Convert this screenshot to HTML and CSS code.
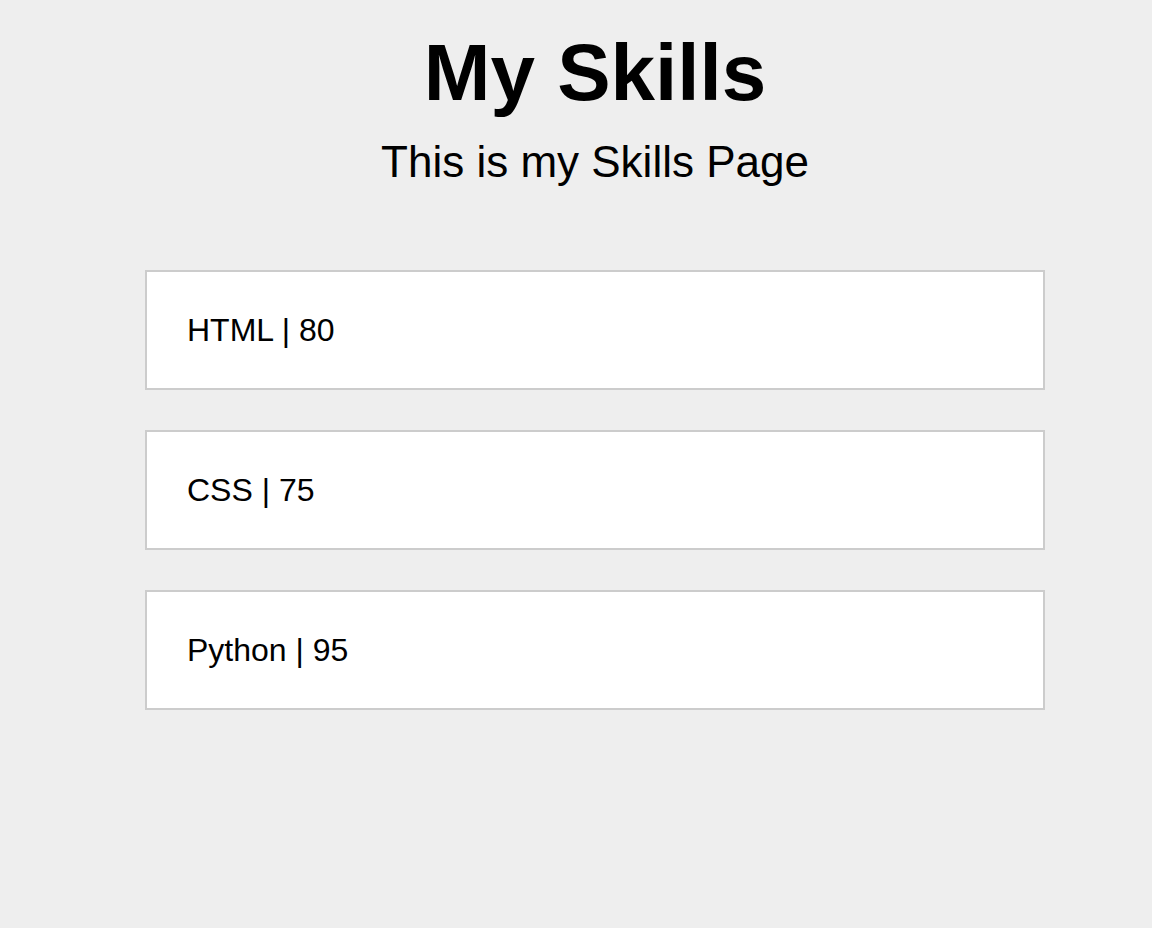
FILE: index.html
```html
<!DOCTYPE html>
<html lang="en">
<head>
<meta charset="utf-8">
<title>My Skills</title>
<link rel="stylesheet" href="styles.css">
</head>
<body>
<main class="page">
  <header class="header">
    <h1 class="title">My Skills</h1>
    <p class="subtitle">This is my Skills Page</p>
  </header>
  <section class="skills">
    <div class="skill">HTML | 80</div>
    <div class="skill">CSS | 75</div>
    <div class="skill">Python | 95</div>
  </section>
</main>
</body>
</html>
```
FILE: styles.css
```css
html, body {
  margin: 0;
  padding: 0;
  background: #eeeeee;
  font-family: "Liberation Sans", Arial, sans-serif;
  color: #000;
}
.page {
  margin-left: 38px;
  padding-top: 27px;
  display: flex;
  flex-direction: column;
  align-items: center;
}
.header {
  text-align: center;
}
.title {
  margin: 0;
  font-size: 80px;
  font-weight: bold;
  line-height: 92px;
}
.subtitle {
  margin: 17px 0 0;
  font-size: 44px;
  line-height: 51px;
}
.skills {
  margin-top: 83px;
  width: 900px;
  display: flex;
  flex-direction: column;
  gap: 40px;
}
.skill {
  background: #fff;
  border: 2px solid #cccccc;
  padding: 40px;
  font-size: 32px;
  line-height: 36px;
}
```
